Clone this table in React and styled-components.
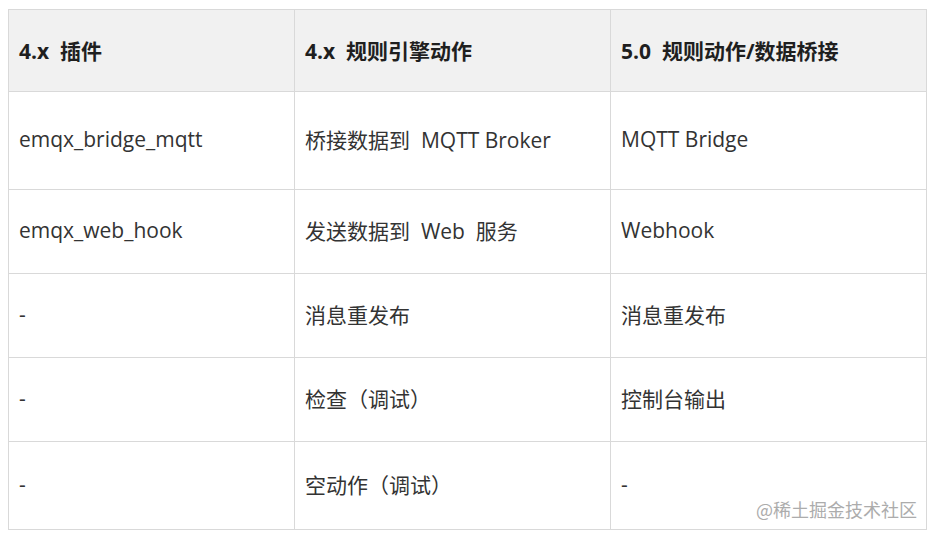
import React from 'react';
import styled, { createGlobalStyle } from 'styled-components';

const GlobalStyle = createGlobalStyle`
	body {
		margin: 0;
		background: #ffffff;
		font-family: 'Open Sans', 'Noto Sans CJK SC', sans-serif;
	}
`;

export const Page = styled.div`
	position: relative;
	padding: 9px 8px;
	width: 918px;
`;

export const Tabela = styled.table`
	width: 918px;
	border-collapse: collapse;
	table-layout: fixed;
	font-size: 21px;
	color: #333333;
`;

export const Linha = styled.tr`
	height: ${(props) => props.h}px;
`;

export const Cabecalho = styled.th`
	background: #f1f1f1;
	border: 1px solid #d9d9d9;
	text-align: left;
	padding: 0 10px 2px;
	font-weight: 700;
	color: #1f1f1f;
	white-space: nowrap;
`;

export const Celula = styled.td`
	border: 1px solid #d9d9d9;
	padding: 0 10px 3px;
	white-space: nowrap;
`;

export const MarcaDagua = styled.div`
	position: absolute;
	right: 17px;
	bottom: 17px;
	font-family: 'Noto Sans CJK SC', sans-serif;
	font-size: 18px;
	color: #acacac;
	text-shadow: 0 0 1px #ffffff;
`;

const linhas = [
	{ h: 98, c: ['emqx_bridge_mqtt', '桥接数据到\u00a0 MQTT Broker', 'MQTT Bridge'] },
	{ h: 84, c: ['emqx_web_hook', '发送数据到\u00a0 Web\u00a0 服务', 'Webhook'] },
	{ h: 84, c: ['-', '消息重发布', '消息重发布'] },
	{ h: 84, c: ['-', '检查（调试）', '控制台输出'] },
	{ h: 88, c: ['-', '空动作（调试）', '-'] },
];

function App() {
	return (
		<Page>
			<GlobalStyle />
			<Tabela>
				<colgroup>
					<col style={{ width: 286 }} />
					<col style={{ width: 316 }} />
					<col style={{ width: 316 }} />
				</colgroup>
				<thead>
					<Linha h={82}>
						<Cabecalho>4.x&nbsp; 插件</Cabecalho>
						<Cabecalho>4.x&nbsp; 规则引擎动作</Cabecalho>
						<Cabecalho>5.0&nbsp; 规则动作/数据桥接</Cabecalho>
					</Linha>
				</thead>
				<tbody>
					{linhas.map((linha, i) => (
						<Linha key={i} h={linha.h}>
							{linha.c.map((texto, j) => (
								<Celula key={j}>{texto}</Celula>
							))}
						</Linha>
					))}
				</tbody>
			</Tabela>
			<MarcaDagua>@稀土掘金技术社区</MarcaDagua>
		</Page>
	);
}

export default App;
